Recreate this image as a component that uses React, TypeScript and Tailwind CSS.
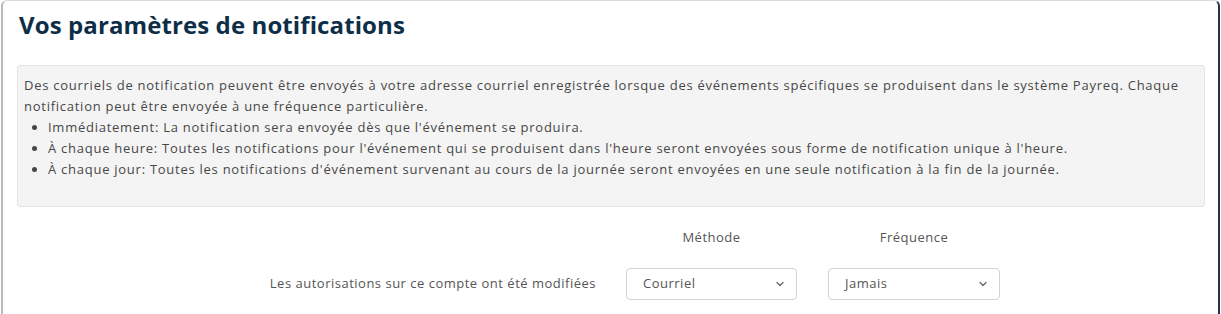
import { ChevronDown } from 'lucide-react';

const font = { fontFamily: '"Open Sans", "Liberation Sans", sans-serif' };

function FakeSelect({ value, width }: { value: string; width: string }) {
  return (
    <div
      className={`${width} h-[32px] flex items-center justify-between pl-[16px] pr-[10px] border border-[#d3d3d3] rounded-[4px] bg-white text-[13px] tracking-[0.5px] text-[#555]`}
    >
      <span>{value}</span>
      <ChevronDown size={12} strokeWidth={2.5} className="text-[#666]" />
    </div>
  );
}

export default function App() {
  return (
    <div className="w-[1221px] h-[314px] overflow-hidden bg-white" style={font}>
      <div className="ml-[1px] w-[1219px] h-[340px] border-l-2 border-t border-r-2 border-l-[#b7bcc2] border-t-[#d8dce0] border-r-[#1d3650] rounded-t-[6px]">
        <h1 className="pl-[16px] pt-[6px] h-[64px] text-[24px] font-bold text-[#0e2e48] tracking-[0.1px]">
          Vos paramètres de notifications
        </h1>

        <div className="ml-[14px] mr-[13px] bg-[#f4f4f4] border border-[#e4e4e4] rounded-[3px] pl-[6px] pr-[6px] pt-[9px] pb-[26px] text-[13px] leading-[21px] tracking-[0.74px] text-[#474747]">
          <p>
            Des courriels de notification peuvent être envoyés à votre adresse courriel enregistrée lorsque des
            événements spécifiques se produisent dans le système Payreq. Chaque notification peut être envoyée à une
            fréquence particulière.
          </p>
          <ul className="list-disc pl-[24px]">
            <li>Immédiatement: La notification sera envoyée dès que l'événement se produira.</li>
            <li>
              À chaque heure: Toutes les notifications pour l'événement qui se produisent dans l'heure seront envoyées
              sous forme de notification unique à l'heure.
            </li>
            <li>
              À chaque jour: Toutes les notifications d'événement survenant au cours de la journée seront envoyées en
              une seule notification à la fin de la journée.
            </li>
          </ul>
        </div>

        <div className="flex items-center mt-[21px] text-[13px] tracking-[0.5px] text-[#555]">
          <div className="w-[623px]" />
          <div className="w-[171px] text-center">Méthode</div>
          <div className="ml-[31px] w-[172px] text-center">Fréquence</div>
        </div>

        <div className="flex items-center mt-[20px] text-[13px] tracking-[0.5px] text-[#555]">
          <div className="w-[593px] text-right">Les autorisations sur ce compte ont été modifiées</div>
          <div className="ml-[30px]">
            <FakeSelect value="Courriel" width="w-[171px]" />
          </div>
          <div className="ml-[31px]">
            <FakeSelect value="Jamais" width="w-[172px]" />
          </div>
        </div>
      </div>
    </div>
  );
}
